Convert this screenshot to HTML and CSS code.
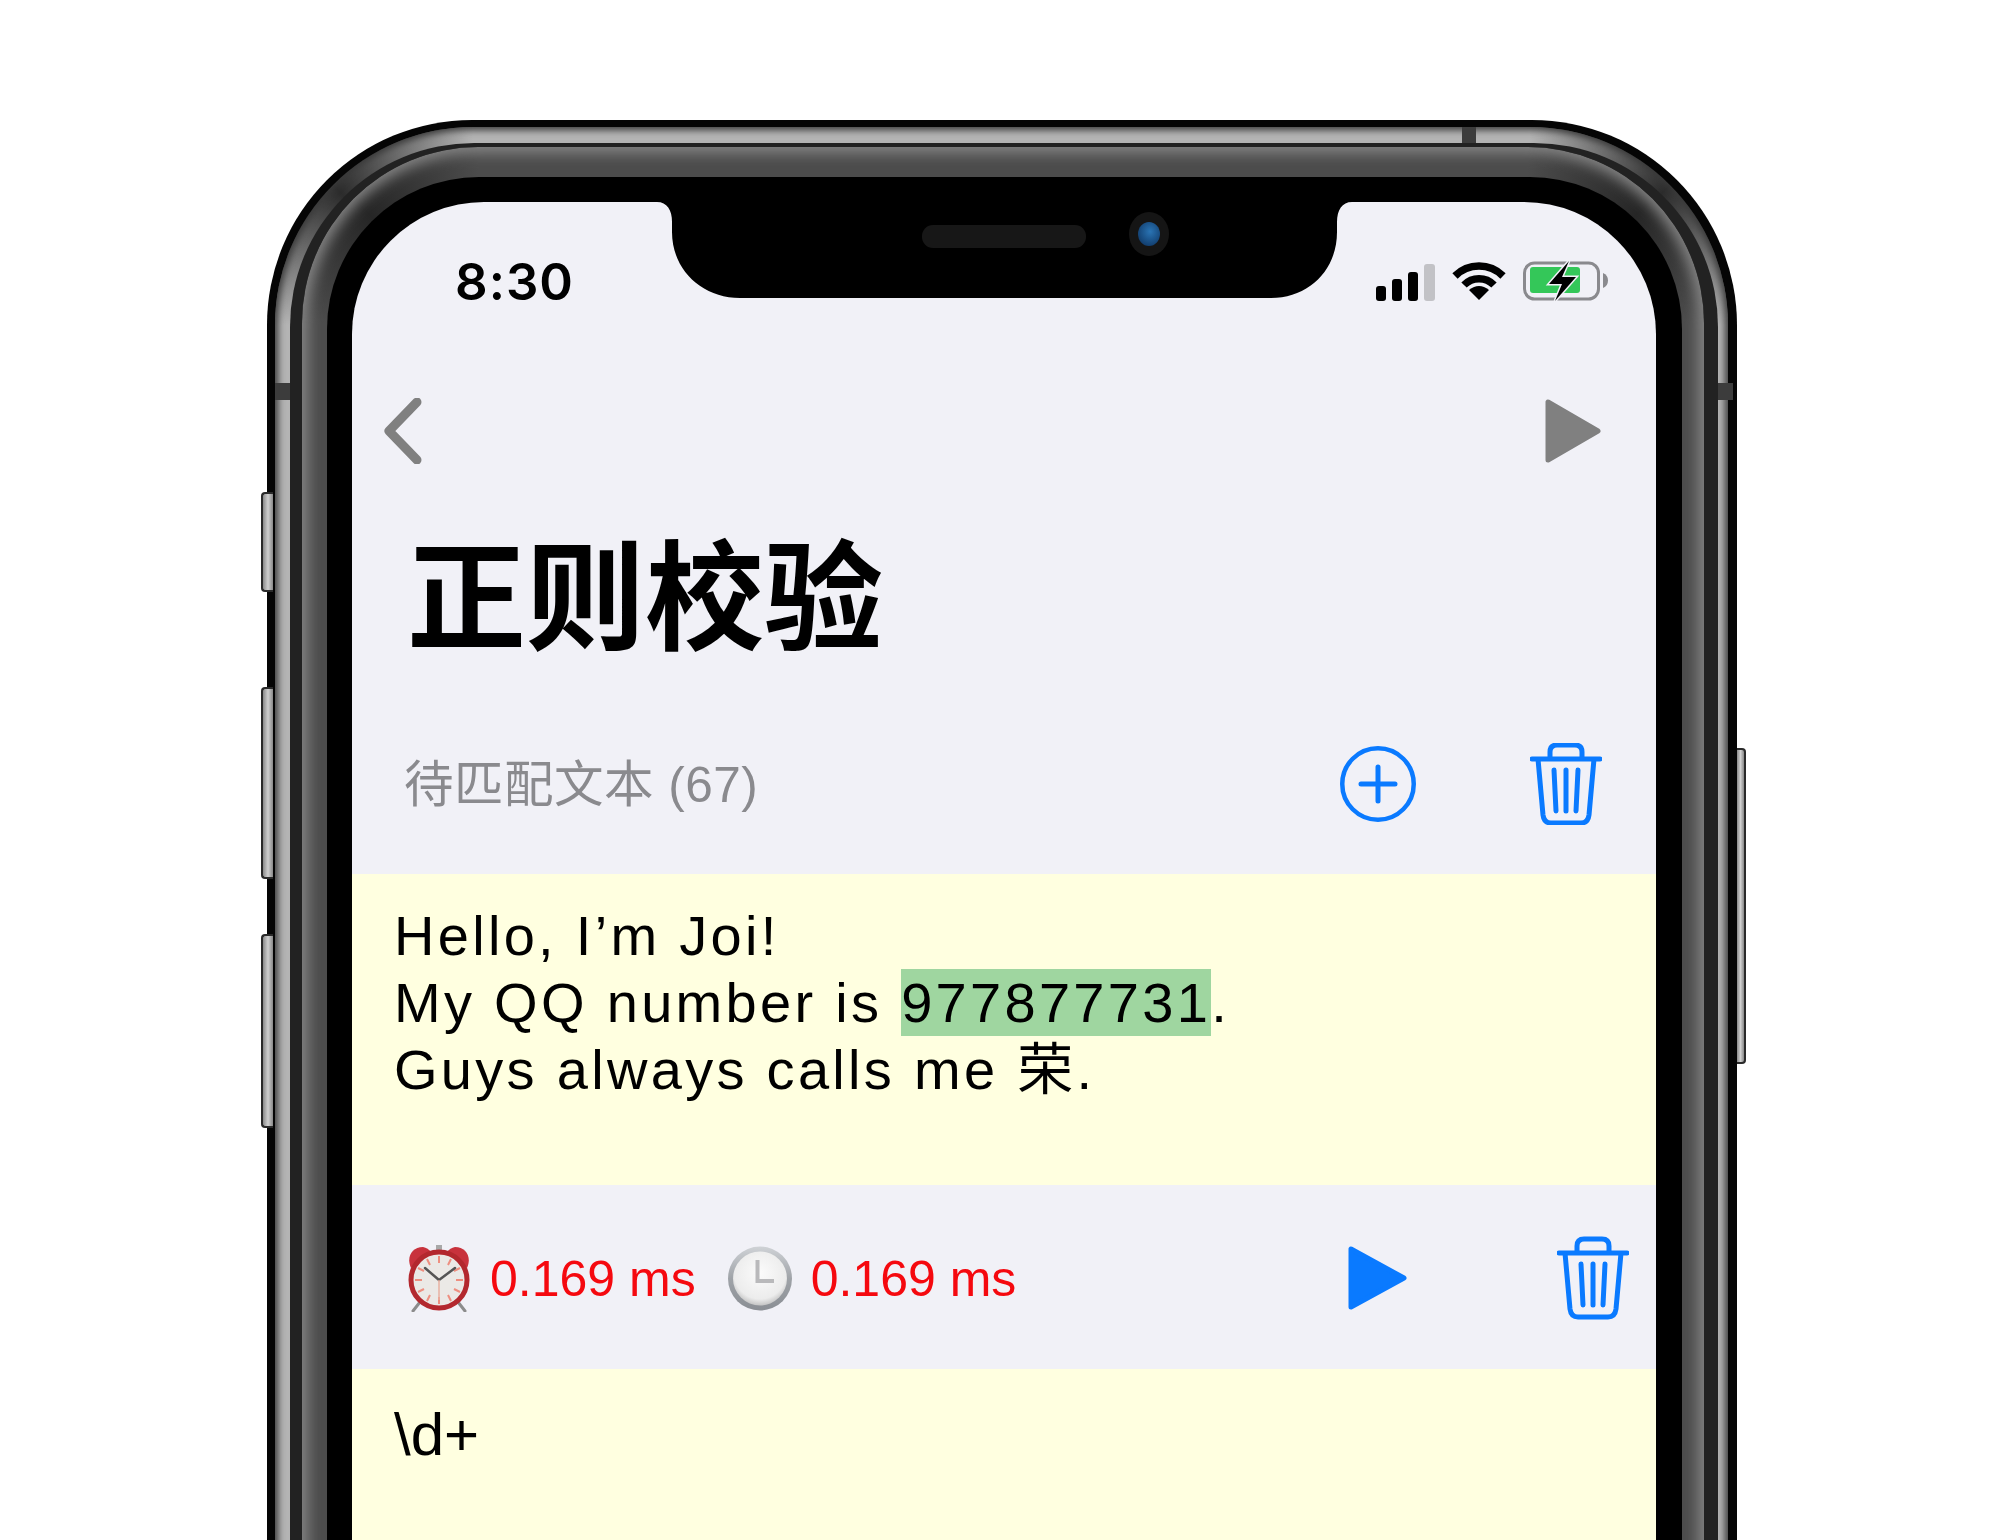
FILE: index.html
```html
<!DOCTYPE html>
<html lang="zh-CN">
<head>
  <meta charset="UTF-8">
  <title>正则校验</title>
  <link rel="stylesheet" href="styles.css">
</head>
<body>

<div class="phone">
  <span class="side-btn btn-mute"></span>
  <span class="side-btn btn-up"></span>
  <span class="side-btn btn-down"></span>
  <span class="side-btn btn-power"></span>
  <span class="antenna antenna-top"></span>
  <span class="antenna antenna-left"></span>
  <span class="antenna antenna-right"></span>

  <div class="band-light">
    <div class="band-dark">
      <div class="band-steel">
        <div class="bezel">
          <div class="screen">

            <!-- Notch -->
            <div class="notch">
              <svg width="695" height="96" viewBox="0 0 695 96">
                <defs>
                  <radialGradient id="lens" cx="0.55" cy="0.4" r="0.6">
                    <stop offset="0" stop-color="#2a74b4"/>
                    <stop offset="1" stop-color="#123f70"/>
                  </radialGradient>
                </defs>
                <path d="M0 0C10 0 15 8 15 20V30C15 68 45 96 83 96H614C652 96 680 68 680 30V20C680 8 685 0 695 0Z" fill="#000"/>
                <rect x="265" y="23" width="164" height="23" rx="11" fill="#171717"/>
                <ellipse cx="492" cy="32" rx="20" ry="22" fill="#151515"/>
                <ellipse cx="492" cy="32" rx="11" ry="12" fill="url(#lens)"/>
              </svg>
            </div>

            <!-- Status bar -->
            <div class="status">
              <span class="time">8:30</span>
              <div class="status-icons">
                <svg width="59" height="37" viewBox="0 0 59 37">
                  <rect x="0" y="22" width="10" height="15" rx="3" fill="#000"/>
                  <rect x="16" y="15" width="10" height="22" rx="3" fill="#000"/>
                  <rect x="32" y="8" width="10" height="29" rx="3" fill="#000"/>
                  <rect x="48" y="0" width="11" height="37" rx="3" fill="#c2c2c6"/>
                </svg>
                <svg width="54" height="40" viewBox="0 0 54 40">
                  <path d="M3 15A34 34 0 0 1 51 15" fill="none" stroke="#000" stroke-width="7.5"/>
                  <path d="M12 24A21 21 0 0 1 42 24" fill="none" stroke="#000" stroke-width="7.5"/>
                  <path d="M27 39L17 29Q27 21 37 29Z" fill="#000"/>
                </svg>
                <svg width="86" height="40" viewBox="0 0 86 40">
                  <rect x="1.5" y="2" width="74" height="36" rx="10" fill="none" stroke="#8a8a8e" stroke-width="3"/>
                  <rect x="7" y="6" width="50" height="26" rx="3" fill="#34c759"/>
                  <path d="M80 12Q85 14 85 19.5Q85 25 80 27Z" fill="#8a8a8e"/>
                  <path d="M46 0L26 23H39L32 40L53 16H39Z" fill="#000" stroke="#f1f1f7" stroke-width="3" paint-order="stroke"/>
                </svg>
              </div>
            </div>

            <!-- Nav bar -->
            <div class="nav">
              <svg width="38" height="66" viewBox="0 0 38 66">
                <path d="M33 4L5 33L33 62" fill="none" stroke="#808080" stroke-width="9" stroke-linecap="round" stroke-linejoin="round"/>
              </svg>
              <svg width="56" height="64" viewBox="0 0 56 64">
                <path d="M3 3V61L53 32Z" fill="#808080" stroke="#808080" stroke-width="5" stroke-linejoin="round"/>
              </svg>
            </div>

            <h1 class="title">正则校验</h1>

            <!-- Text to match -->
            <div class="section-head">
              <span class="label">待匹配文本 (67)</span>
              <div class="head-actions">
                <svg width="76" height="76" viewBox="0 0 76 76">
                  <circle cx="38" cy="38" r="35.75" fill="none" stroke="#0a7aff" stroke-width="4.5"/>
                  <path d="M38 21V55M21 38H55" fill="none" stroke="#0a7aff" stroke-width="5" stroke-linecap="round"/>
                </svg>
                <svg width="72" height="82" viewBox="0 0 72 82">
                  <path d="M2 16H70M20 16V9Q20 2 27 2H45Q52 2 52 9V16M8 16L13 72Q14 80 21 80H51Q58 80 59 72L64 16M24 27L26 68M36 27V68M48 27L46 68" fill="none" stroke="#0a7aff" stroke-width="5" stroke-linecap="round" stroke-linejoin="round"/>
                </svg>
              </div>
            </div>
            <div class="editor">
              <div>Hello, I’m Joi!</div>
              <div>My QQ number is <span class="match">977877731</span>.</div>
              <div>Guys always calls me 荣.</div>
            </div>

            <!-- Timing row -->
            <div class="timing">
              <svg class="emoji" width="64" height="68" viewBox="0 0 64 68">
                <path d="M4 24C-1 13 5 3 16 3Q21 4 24 8Z" fill="#c8323c"/>
                <path d="M60 24C65 13 59 3 48 3Q43 4 40 8Z" fill="#c8323c"/>
                <rect x="29" y="1" width="6" height="6" fill="#a8a8a8"/>
                <path d="M13 58L6 67M51 58L58 67" stroke="#8c8c8c" stroke-width="3" stroke-linecap="round"/>
                <circle cx="32" cy="36" r="28" fill="#ebe9e6" stroke="#b3282e" stroke-width="5"/>
                <path d="M32 12V19M32 53V60M8 36H15M49 36H56M20 15L23 21M44 15L41 21M20 57L23 51M44 57L41 51M11 24L17 27M53 24L47 27M11 48L17 45M53 48L47 45" stroke="#ee8f80" stroke-width="2"/>
                <path d="M32 36L18 24M32 36L48 24" stroke="#555" stroke-width="2.5" stroke-linecap="round"/>
                <path d="M32 36V56" stroke="#e8b0a0" stroke-width="1.5"/>
              </svg>
              <span class="ms first">0.169 ms</span>
              <svg class="emoji" width="64" height="65" viewBox="0 0 64 65">
                <defs>
                  <linearGradient id="rim" x1="0" y1="0" x2="0" y2="1">
                    <stop offset="0" stop-color="#cfd2d6"/>
                    <stop offset="0.5" stop-color="#9fa3a8"/>
                    <stop offset="1" stop-color="#8a8e94"/>
                  </linearGradient>
                  <radialGradient id="face" cx="0.5" cy="0.4" r="0.6">
                    <stop offset="0" stop-color="#fbfbfb"/>
                    <stop offset="0.8" stop-color="#ececec"/>
                    <stop offset="1" stop-color="#c4c4c4"/>
                  </radialGradient>
                </defs>
                <circle cx="32" cy="32.5" r="32" fill="url(#rim)"/>
                <circle cx="32" cy="32.5" r="27" fill="url(#face)"/>
                <path d="M29.5 14V35H46" fill="none" stroke="#b9b9bb" stroke-width="4"/>
              </svg>
              <span class="ms">0.169 ms</span>
              <div class="timing-actions">
                <svg width="60" height="64" viewBox="0 0 60 64">
                  <path d="M3 3V61L56 32Z" fill="#0a7aff" stroke="#0a7aff" stroke-width="5" stroke-linejoin="round"/>
                </svg>
                <svg width="72" height="84" viewBox="0 0 72 82">
                  <path d="M2 16H70M20 16V9Q20 2 27 2H45Q52 2 52 9V16M8 16L13 72Q14 80 21 80H51Q58 80 59 72L64 16M24 27L26 68M36 27V68M48 27L46 68" fill="none" stroke="#0a7aff" stroke-width="5" stroke-linecap="round" stroke-linejoin="round"/>
                </svg>
              </div>
            </div>

            <div class="regex">\d+</div>

          </div>
        </div>
      </div>
    </div>
  </div>
</div>

</body>
</html>
```

FILE: styles.css
```css
html, body {
  margin: 0;
  height: 1540px;
  overflow: hidden;
  background-color: #fff;
}

body {
  font-family: "Liberation Sans", "Noto Sans CJK SC", sans-serif;
  padding-top: 120px;
  box-sizing: border-box;
}

svg {
  display: block;
  flex-shrink: 0;
}

/* Phone body, ring by ring from the outside in */
.phone {
  position: relative;
  width: 1470px;
  margin-left: 267px;
  box-sizing: border-box;
  padding: 7px 9px 0 8px;
  background-color: #050505;
  border-radius: 205px 205px 0 0;
}

/* conic layers darken the curved corners of a band */
.band-light {
  padding: 16px 10px 0 15px;
  background:
    conic-gradient(from 270deg at 198px 198px, #b4b4b4, #2c2c2c 45deg, #b4b4b4 90deg) left top / 198px 198px no-repeat,
    conic-gradient(from 0deg at 0 198px, #b4b4b4, #2c2c2c 45deg, #b4b4b4 90deg) right top / 198px 198px no-repeat,
    #b4b4b4;
  border-radius: 198px 198px 0 0;
  box-shadow: inset 0 0 7px 3px #3a3a3a;
}

.band-dark {
  padding: 4px 14px 0 12px;
  background-color: #222;
  border-radius: 184px 184px 0 0;
}

.band-steel {
  padding: 30px 22px 0 25px;
  background:
    conic-gradient(from 270deg at 176px 176px, #4c4c4c, #262626 45deg, #4c4c4c 90deg) left top / 176px 176px no-repeat,
    conic-gradient(from 0deg at 0 176px, #4c4c4c, #262626 45deg, #4c4c4c 90deg) right top / 176px 176px no-repeat,
    #4c4c4c;
  border-radius: 176px 176px 0 0;
  box-shadow: inset 0 0 14px 6px #858585;
}

.bezel {
  padding: 25px 26px 0 25px;
  background-color: #000;
  border-radius: 152px 152px 0 0;
}

.screen {
  position: relative;
  height: 1400px;
  overflow: hidden;
  background-color: #f1f1f7;
  border-radius: 132px 132px 0 0;
}

.side-btn {
  position: absolute;
  left: -6px;
  width: 10px;
  box-sizing: content-box;
  background: linear-gradient(to right, #8a8a8a, #d0d0d0 50%, #888);
  border: 2px solid #2a2a2a;
  border-right: none;
  border-radius: 4px 0 0 4px;
}

.btn-mute { top: 372px; height: 96px; }
.btn-up { top: 567px; height: 188px; }
.btn-down { top: 814px; height: 190px; }

.btn-power {
  left: auto;
  right: -9px;
  top: 628px;
  width: 7px;
  height: 312px;
  border: 2px solid #2a2a2a;
  border-left: none;
  border-radius: 0 4px 4px 0;
}

.antenna {
  position: absolute;
  background-color: #3c3c3c;
}

.antenna-top { left: 1195px; top: 7px; width: 14px; height: 16px; }
.antenna-left { left: 8px; top: 263px; width: 15px; height: 17px; }
.antenna-right { left: 1451px; top: 263px; width: 15px; height: 17px; }

.notch {
  position: absolute;
  top: 0;
  left: 305px;
}

/* Status bar */
.status {
  height: 158px;
  display: flex;
  justify-content: space-between;
  align-items: center;
  padding: 0 47px 0 103px;
}

.time {
  font-family: Inter, sans-serif;
  font-size: 51px;
  font-weight: 600;
  letter-spacing: 1px;
  color: #000;
}

.status-icons {
  display: flex;
  align-items: flex-end;
  gap: 17px;
}

.nav {
  height: 142px;
  display: flex;
  justify-content: space-between;
  align-items: center;
  padding: 0 55px 0 32px;
}

.title {
  margin: 0;
  height: 184px;
  padding-left: 55px;
  font-family: "Noto Sans CJK SC", sans-serif;
  font-size: 119px;
  font-weight: 700;
  line-height: 175px;
  color: #000;
}

.section-head {
  height: 180px;
  padding: 8px 54px 0 52px;
  display: flex;
  justify-content: space-between;
  align-items: center;
}

.label {
  font-size: 49.5px;
  letter-spacing: 0.5px;
  color: #8a8a8e;
  margin-bottom: 8px;
}

.head-actions {
  display: flex;
  align-items: center;
  gap: 114px;
}

.editor {
  height: 283px;
  padding: 28px 0 0 42px;
  background-color: #ffffe0;
  font-size: 56px;
  line-height: 67px;
  letter-spacing: 3.3px;
  color: #000;
}

.match {
  display: inline-block;
  background-color: #9fd6a0;
}

.timing {
  height: 182px;
  padding: 2px 27px 0 55px;
  display: flex;
  align-items: center;
}

.ms {
  font-size: 50px;
  color: #f5090f;
  margin: 2px 0 0 19px;
}

.ms.first {
  margin-right: 32px;
}

.timing-actions {
  margin-left: auto;
  display: flex;
  align-items: center;
  gap: 149px;
}

.regex {
  height: 400px;
  padding: 31px 0 0 42px;
  background-color: #ffffe0;
  font-size: 60px;
  line-height: 70px;
  color: #000;
}
```
